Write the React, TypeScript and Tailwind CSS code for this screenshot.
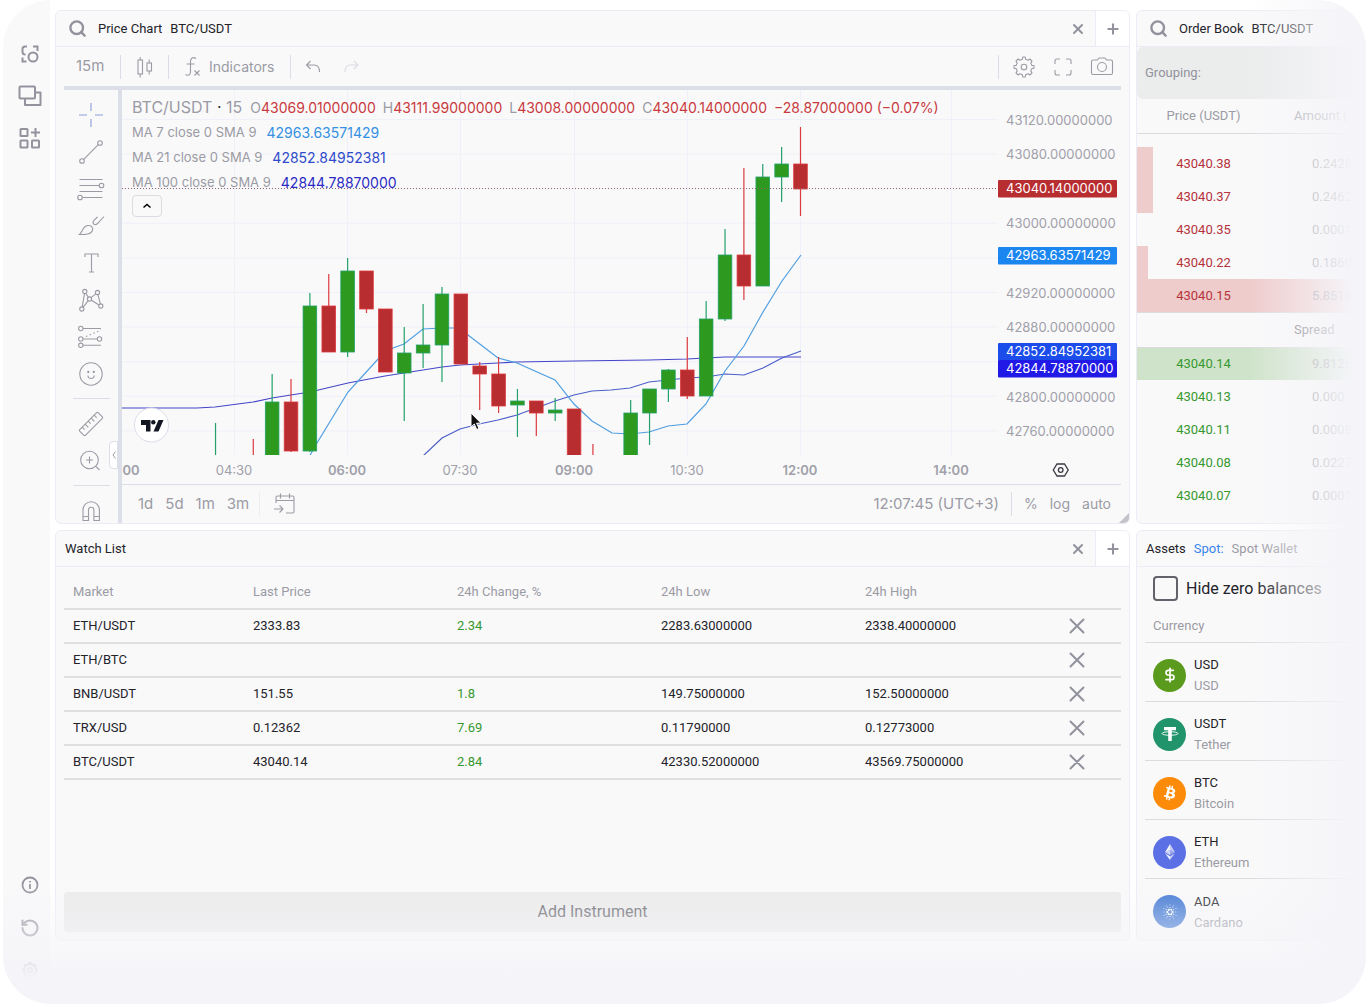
import React from "react";
import { DollarSign, Plus, RotateCcw, Search, X } from "lucide-react";
import { SiBitcoin, SiCardano } from "react-icons/si";

type Side = "up" | "down";

type Candle = {
  slot: number;
  high: number;
  top: number;
  bottom: number;
  low: number;
  side: Side;
};

// slot counts back from the latest candle, the rest are pane y values
const candles: Candle[] = [
  { slot: 0, high: 37, top: 74, bottom: 99, low: 126, side: "down" },
  { slot: 1, high: 57, top: 74, bottom: 87, low: 112, side: "up" },
  { slot: 2, high: 74, top: 87, bottom: 196, low: 196, side: "up" },
  { slot: 3, high: 78, top: 165, bottom: 196, low: 210, side: "down" },
  { slot: 4, high: 139, top: 165, bottom: 229, low: 231, side: "up" },
  { slot: 5, high: 211, top: 229, bottom: 306, low: 306, side: "up" },
  { slot: 6, high: 247, top: 280, bottom: 306, low: 309, side: "down" },
  { slot: 7, high: 279, top: 280, bottom: 299, low: 312, side: "up" },
  { slot: 8, high: 299, top: 299, bottom: 323, low: 355, side: "up" },
  { slot: 9, high: 310, top: 323, bottom: 370, low: 370, side: "up" },
  { slot: 11, high: 354, top: 370, bottom: 372, low: 372, side: "down" },
  { slot: 12, high: 319, top: 319, bottom: 370, low: 370, side: "down" },
  { slot: 13, high: 308, top: 320, bottom: 323, low: 331, side: "up" },
  { slot: 14, high: 311, top: 311, bottom: 323, low: 346, side: "down" },
  { slot: 15, high: 299, top: 311, bottom: 315, low: 347, side: "up" },
  { slot: 16, high: 267, top: 284, bottom: 316, low: 323, side: "down" },
  { slot: 17, high: 272, top: 276, bottom: 284, low: 320, side: "down" },
  { slot: 18, high: 204, top: 204, bottom: 274, low: 274, side: "down" },
  { slot: 19, high: 197, top: 204, bottom: 255, low: 292, side: "up" },
  { slot: 20, high: 214, top: 255, bottom: 263, low: 278, side: "up" },
  { slot: 21, high: 237, top: 263, bottom: 283, low: 331, side: "up" },
  { slot: 22, high: 219, top: 219, bottom: 282, low: 282, side: "down" },
  { slot: 23, high: 181, top: 181, bottom: 219, low: 223, side: "down" },
  { slot: 24, high: 168, top: 181, bottom: 262, low: 267, side: "up" },
  { slot: 25, high: 184, top: 216, bottom: 262, low: 262, side: "down" },
  { slot: 26, high: 203, top: 216, bottom: 361, low: 362, side: "up" },
  { slot: 27, high: 289, top: 312, bottom: 361, low: 362, side: "down" },
  { slot: 28, high: 284, top: 312, bottom: 370, low: 370, side: "up" },
  { slot: 29, high: 349, top: 370, bottom: 372, low: 372, side: "down" },
  { slot: 31, high: 333, top: 370, bottom: 372, low: 372, side: "up" },
];

const ma7 =
  "187,367 195,353 226,302 257,268 271,258 282,254 301,239 320,238 333,238 346,245 376,268 395,273 433,290 452,314 470,331 490,343 508,344 527,342 546,336 565,334 584,314 603,281 622,256 641,222 660,191 679,165";
const ma21 =
  "301,366 320,348 338,339 357,334 376,330 395,325 414,318 433,311 452,305 470,301 489,300 508,298 527,292 546,290 565,288 584,287 603,284 622,285 641,278 660,268 679,261";
const ma100 =
  "0,318 75,318 93,317 131,312 150,308 188,302 226,293 263,286 282,283 320,277 338,275 376,273 395,272 452,271 527,270 565,269 603,267 641,267 679,267";

const timeLabels = [
  { x: 9, text: "00", bold: true },
  { x: 112, text: "04:30", bold: false },
  { x: 225, text: "06:00", bold: true },
  { x: 338, text: "07:30", bold: false },
  { x: 452, text: "09:00", bold: true },
  { x: 565, text: "10:30", bold: false },
  { x: 678, text: "12:00", bold: true },
  { x: 829, text: "14:00", bold: true },
];

const priceLabels = [
  { y: 30, text: "43120.00000000" },
  { y: 64, text: "43080.00000000" },
  { y: 133, text: "43000.00000000" },
  { y: 203, text: "42920.00000000" },
  { y: 237, text: "42880.00000000" },
  { y: 307, text: "42800.00000000" },
  { y: 341, text: "42760.00000000" },
];

const priceTags = [
  { y: 98, text: "43040.14000000", color: "#b72d30" },
  { y: 165, text: "42963.63571429", color: "#1b86f0" },
  { y: 261, text: "42852.84952381", color: "#1c4cea" },
  { y: 278, text: "42844.78870000", color: "#2119e6" },
];

const markets = [
  { name: "ETH/USDT", last: "2333.83", change: "2.34", low: "2283.63000000", high: "2338.40000000" },
  { name: "ETH/BTC", last: "", change: "", low: "", high: "" },
  { name: "BNB/USDT", last: "151.55", change: "1.8", low: "149.75000000", high: "152.50000000" },
  { name: "TRX/USD", last: "0.12362", change: "7.69", low: "0.11790000", high: "0.12773000" },
  { name: "BTC/USDT", last: "43040.14", change: "2.84", low: "42330.52000000", high: "43569.75000000" },
];

const asks = [
  { price: "43040.38", amount: "0.2428", depth: 7 },
  { price: "43040.37", amount: "0.2462", depth: 7 },
  { price: "43040.35", amount: "0.0001", depth: 0 },
  { price: "43040.22", amount: "0.1860", depth: 5 },
  { price: "43040.15", amount: "5.8518", depth: 100 },
];

const bids = [
  { price: "43040.14", amount: "9.8126", depth: 100 },
  { price: "43040.13", amount: "0.000", depth: 0 },
  { price: "43040.11", amount: "0.0008", depth: 0 },
  { price: "43040.08", amount: "0.0227", depth: 0 },
  { price: "43040.07", amount: "0.0001", depth: 0 },
];

type IconProps = {
  children: React.ReactNode;
  className?: string;
};

const Icon = ({ children, className = "h-7 w-7" }: IconProps) => (
  <svg
    viewBox="0 0 28 28"
    fill="none"
    stroke="currentColor"
    strokeWidth="1.1"
    className={className}
    aria-hidden="true"
  >
    {children}
  </svg>
);

// eight rounded teeth around (14, 14)
const GEAR =
  "M12.4 6.2 12.8 4h2.4l.4 2.2 2.5 1 1.8-1.2 2.1 2.1-1.200 1.800 1 2.500 2.200.4v2.400l-2.200.4-1 2.500 1.200 1.800-2.100 2.100-1.800-1.200-2.500 1-.4 2.200h-2.400l-.4-2.200-2.500-1-1.800 1.200L6 19.900l1.200-1.800-1-2.500L4 15.200v-2.400l2.200-.4 1-2.500L6 8.100 8.100 6l1.800 1.200z";

const drawingTools = [
  {
    label: "Cross",
    active: true,
    icon: <path d="M14 2v8M14 18v8M2 14h8M18 14h8" />,
  },
  {
    label: "Trend line",
    icon: (
      <>
        <circle cx="5" cy="23" r="2.3" />
        <circle cx="23" cy="5" r="2.3" />
        <path d="M6.7 21.3 21.3 6.7" />
      </>
    ),
  },
  {
    label: "Fib retracement",
    icon: (
      <>
        <path d="M2.5 4.500h23M2.500 10.500h19.500M2.500 16.500h23M5.500 22.500h20" />
        <circle cx="24.5" cy="10.5" r="2.3" />
        <circle cx="3" cy="22.5" r="2.3" />
      </>
    ),
  },
  {
    label: "Brush",
    icon: (
      <>
        <path d="M2.5 22.5C6 19.500 5.500 14.500 10.500 13.500c3.500-.5 6 2 5 5-1.500 4-7 4-13 4z" />
        <path d="M27 4.500 20.500 11.500c-2.500 2.500-5.500.5-4-2.500C17.500 7.500 19 6.500 20.500 5" />
      </>
    ),
  },
  {
    label: "Text",
    icon: <path d="M8 8V5h13v3M14.5 5v18M12 23h5" />,
  },
  {
    label: "Patterns",
    icon: (
      <>
        <circle cx="7.8" cy="5.5" r="2.1" />
        <circle cx="20.5" cy="6.5" r="2.1" />
        <circle cx="4.8" cy="23" r="2.1" />
        <circle cx="23.8" cy="20" r="2.1" />
        <circle cx="12.5" cy="13" r="2.1" />
        <path d="M7.5 7.6 5.2 20.9M8.8 7.4l2.6 3.9M14 11.6l4.9-3.7M20.9 8.600l2.500 9.300M14.400 14.200l7.600 4.800M11.200 14.700l-5.100 6.700" />
      </>
    ),
  },
  {
    label: "Prediction",
    icon: (
      <>
        <circle cx="3.8" cy="5.5" r="2.2" />
        <circle cx="3.8" cy="16" r="2.2" />
        <circle cx="22.5" cy="16" r="2.2" />
        <circle cx="3.8" cy="22.3" r="2.2" />
        <path d="M6 5.500h18M6 16h14.300M6 22.300h18" />
        <path d="M9 13.500 24 7" strokeDasharray="1.5 2.5" />
      </>
    ),
  },
  {
    label: "Emoji",
    icon: (
      <>
        <circle cx="14" cy="14" r="11.2" />
        <path d="M10.800 15.500c.5 4 6 4 6.500 0" />
        <circle cx="11.3" cy="12" r=".6" fill="currentColor" />
        <circle cx="16.8" cy="12" r=".6" fill="currentColor" />
      </>
    ),
  },
];

const lowerTools = [
  {
    label: "Measure",
    icon: (
      <g transform="rotate(-45 14 14)">
        <rect x="1" y="10" width="26" height="8" rx="1" />
        <path d="M5.500 10v3.500M9.700 10v4.500M14 10v3.500M18.300 10v4.500M22.500 10v3.500" />
      </g>
    ),
  },
  {
    label: "Zoom in",
    icon: (
      <>
        <circle cx="12.5" cy="13" r="8.8" />
        <path d="M18.800 19.300 22.500 23M12.500 9.500v7M9 13h7" />
      </>
    ),
  },
];

type PanelHeaderProps = {
  children: React.ReactNode;
  closable?: boolean;
};

const PanelHeader = ({ children, closable }: PanelHeaderProps) => (
  <header className="flex h-9 shrink-0 items-stretch border-b border-[#ececf6]">
    <div className="flex flex-1 items-center gap-2 px-[9px] text-[13px] text-[#232329]">
      {children}
    </div>
    {closable ? (
      <>
        <button type="button" aria-label="Close" className="px-[9px] text-[#92929d]">
          <X className="h-4 w-4" strokeWidth={3} />
        </button>
        <button
          type="button"
          aria-label="Add tab"
          className="flex w-[34px] items-center justify-center border-l border-[#ececf6] bg-white text-[#92929d]"
        >
          <Plus className="h-4 w-4" strokeWidth={3} />
        </button>
      </>
    ) : null}
  </header>
);

const SearchIcon = () => (
  <Search className="ml-[3px] mr-[3px] h-[19px] w-[19px] text-[#92929d]" strokeWidth={3} />
);

const Rail = () => (
  <nav className="flex w-[47px] shrink-0 flex-col items-center bg-[#f9f9fa] pt-10 pb-5 pl-1.5 text-[#93939e]">
    <div className="flex flex-col gap-3.5">
      <button type="button" aria-label="Focus">
        <Icon>
          <g strokeWidth="2">
            <path d="M11 6.500H9A2.500 2.500 0 0 0 6.500 9v3c0 1.500 1 2.500 3 2.500M17 6.500h4.500V11M6.500 17.500v4h4" />
            <circle cx="17" cy="17" r="4.500" />
          </g>
        </Icon>
      </button>
      <button type="button" aria-label="Windows">
        <Icon>
          <g strokeWidth="2">
            <rect x="3.500" y="4.500" width="15.500" height="12" rx="1" />
            <path d="M19 10.500h5.500v12.500H9v-6.500" strokeLinejoin="round" />
          </g>
        </Icon>
      </button>
      <button type="button" aria-label="Widgets">
        <Icon>
          <g strokeWidth="2">
            <rect x="4.500" y="5" width="7" height="7" rx=".5" />
            <rect x="4.500" y="16.500" width="7" height="7" rx=".5" />
            <rect x="16" y="16.500" width="7" height="7" rx=".5" />
            <path d="M19.500 4v9M15 8.500h9" />
          </g>
        </Icon>
      </button>
    </div>
    <div className="mt-auto flex flex-col gap-3.5">
      <button type="button" aria-label="Info">
        <Icon>
          <g strokeWidth="1.800">
            <circle cx="14" cy="13" r="7.500" />
            <path d="M14 12v5M14 9v1.500" />
          </g>
        </Icon>
      </button>
      <button type="button" aria-label="Reset" className="flex h-7 items-center justify-center">
        <RotateCcw className="h-5 w-5" strokeWidth={2.5} />
      </button>
      <button type="button" aria-label="Settings" className="flex h-7 items-center justify-center">
        <Icon className="h-5 w-5">
          <g strokeWidth="2.500">
            <path d={GEAR} strokeLinejoin="round" />
            <circle cx="14" cy="14" r="3" />
          </g>
        </Icon>
      </button>
    </div>
  </nav>
);

const Divider = () => <span className="h-6 w-px bg-[#dcdde6]" />;

const ChartToolbar = () => (
  <div className="mx-2 flex h-[39px] items-center text-[#9b9ba4]">
    <button type="button" className="w-14 pl-3 text-left text-[15px]">
      15m
    </button>
    <Divider />
    <button type="button" aria-label="Candles" className="flex w-[47px] justify-center">
      <Icon>
        <rect x="7" y="7" width="4.500" height="14" />
        <rect x="16" y="10" width="4.500" height="8" />
        <path d="M9.200 4v3M9.200 21v3.500M18.200 6.500V10M18.200 18v3.500" />
      </Icon>
    </button>
    <Divider />
    <button type="button" className="flex w-[121px] items-center gap-0.5 pl-2.5 text-sm">
      <Icon>
        <path d="M17 5.500c-3-2-5.500-.5-5.500 3V19c0 3-2.500 4-5 2.500M7.500 11h8" />
        <path d="M15.500 17.500l5 5M20.500 17.500l-5 5" />
      </Icon>
      Indicators
    </button>
    <Divider />
    <button type="button" aria-label="Undo" className="ml-2">
      <Icon>
        <path d="M11.500 8 7.500 12l4 4M7.500 12h7.500c4 0 5.500 2.500 5.500 7" />
      </Icon>
    </button>
    <button type="button" aria-label="Redo" className="ml-2.5 text-[#dcdce2]">
      <Icon>
        <path d="M17 8l4 4-4 4M21 12h-7.500C9.500 12 8 14.500 8 19" />
      </Icon>
    </button>
    <div className="ml-auto flex items-center gap-[11px] pr-[5px]">
      <Divider />
      <button type="button" aria-label="Chart settings">
        <Icon>
          <path d={GEAR} strokeLinejoin="round" />
          <circle cx="14" cy="14" r="2.800" />
        </Icon>
      </button>
      <button type="button" aria-label="Fullscreen">
        <Icon>
          <path d="M11 6H8a2 2 0 0 0-2 2v3M17 6h3a2 2 0 0 1 2 2v3M11 22H8a2 2 0 0 1-2-2v-3M17 22h3a2 2 0 0 0 2-2v-3" />
        </Icon>
      </button>
      <button type="button" aria-label="Snapshot">
        <Icon>
          <path d="M5 7h4.500l1.500-2h6l1.500 2H23a1.500 1.500 0 0 1 1.500 1.500v11.500A1.500 1.500 0 0 1 23 21.500H5A1.500 1.500 0 0 1 3.500 20V8.500A1.500 1.500 0 0 1 5 7z" />
          <circle cx="14" cy="14" r="4.500" />
        </Icon>
      </button>
    </div>
  </div>
);

const DrawingBar = () => (
  <div className="relative w-[58px] shrink-0 border-r-4 border-[#dcdee8] pt-1.5 text-[#9b9ba4]">
    <div className="flex flex-col items-center overflow-hidden">
      {drawingTools.map((tool) => (
        <button
          key={tool.label}
          type="button"
          aria-label={tool.label}
          className={
            tool.active
              ? "flex h-[37px] items-center text-[#8a9fd6]"
              : "flex h-[37px] items-center"
          }
        >
          <Icon>{tool.icon}</Icon>
        </button>
      ))}
      <span className="my-1.5 h-px w-[37px] bg-[#dcdde6]" />
      {lowerTools.map((tool) => (
        <button
          key={tool.label}
          type="button"
          aria-label={tool.label}
          className="flex h-[37px] items-center"
        >
          <Icon>{tool.icon}</Icon>
        </button>
      ))}
      <span className="my-1.5 h-px w-[37px] bg-[#dcdde6]" />
      <button type="button" aria-label="Magnet" className="-mb-2 flex h-[37px] items-center">
        <Icon>
          <path d="M6 23.500V13a8.200 8.200 0 0 1 16.400 0v10.500h-5.500V13a2.700 2.700 0 0 0-5.400 0v10.500zM6 19.500h5.500M16.900 19.500h5.500" />
        </Icon>
      </button>
    </div>
    <button
      type="button"
      aria-label="Collapse toolbar"
      className="absolute top-[351px] right-0 flex h-7 w-[9px] items-center justify-center rounded-l border border-[#dcdee8] bg-white"
    >
      <svg viewBox="0 0 4 8" className="h-2 w-1" fill="none" stroke="currentColor" aria-hidden="true">
        <path d="M3.500.5 1 4l2.500 3.500" />
      </svg>
    </button>
  </div>
);

const CandleShape = ({ candle }: { candle: Candle }) => {
  const x = 678.5 - candle.slot * 18.87;
  const up = candle.side === "up";
  return (
    <g stroke={up ? "#23a06b" : "#dc3a3e"}>
      <path d={`M${x} ${candle.high}V${candle.low}`} strokeWidth="1.2" />
      <rect
        x={x - 6.8}
        y={candle.top}
        width="13.6"
        height={candle.bottom - candle.top}
        fill={up ? "#2e991f" : "#b82e30"}
        strokeWidth="0.8"
      />
    </g>
  );
};

const PriceChart = () => (
  <svg viewBox="0 0 999 394" className="block h-auto w-full" role="img" aria-label="BTC/USDT candles">
    <defs>
      <clipPath id="pane">
        <rect width="876" height="365" />
      </clipPath>
    </defs>
    <g clipPath="url(#pane)">
      <g stroke="#f0f0f8">
        {Array.from({ length: 10 }, (_, i) => (
          <path key={i} d={`M0 ${29.5 + i * 34.6}H876`} />
        ))}
        {timeLabels.slice(1).map((label) => (
          <path key={label.x} d={`M${label.x + 0.5} 0V365`} />
        ))}
      </g>
      <g fill="none" strokeWidth="1.2">
        <polyline points={ma100} stroke="#4545c9" />
        <polyline points={ma21} stroke="#4a5fc8" />
        <polyline points={ma7} stroke="#4f9ee0" />
      </g>
      {candles.map((candle) => (
        <CandleShape key={candle.slot} candle={candle} />
      ))}
      <path d="M0 98.500H876" stroke="#8a6a6a" strokeDasharray="1 2" />
    </g>
    <circle cx="29.500" cy="335" r="17" fill="#fff" stroke="#dcdee8" />
    <path d="M19 330h9.500v11.500h-4.500V335H19zM36.500 330h5l-5 11.500h-5z" fill="#131722" />
    <circle cx="31.300" cy="332.300" r="2.200" fill="#131722" />
    <path
      d="M349 323v14l3.300-3 2.400 5.500 2.300-1-2.400-5.300h4.400z"
      fill="#111"
      stroke="#fff"
      strokeWidth="1"
    />
    <g className="font-['Inter',sans-serif] text-[13px]" fill="#a0a0a9">
      {timeLabels.map((label) => (
        <text
          key={label.x}
          x={label.x}
          y="385"
          textAnchor="middle"
          fontWeight={label.bold ? 600 : 400}
        >
          {label.text}
        </text>
      ))}
      {priceLabels.map((label) => (
        <text key={label.y} x="884" y={label.y + 5}>
          {label.text}
        </text>
      ))}
      {priceTags.map((tag) => (
        <g key={tag.text}>
          <rect x="876" y={tag.y - 8} width="119" height="17.500" rx="1" fill={tag.color} />
          <text x="884" y={tag.y + 5} fill="#fff">
            {tag.text}
          </text>
        </g>
      ))}
    </g>
    <g fill="none" stroke="#3a3a42" strokeWidth="1.300">
      <path d="M935 374h7.500l3.700 6-3.700 6H935l-3.700-6z" />
      <circle cx="938.700" cy="380" r="2.300" />
    </g>
  </svg>
);

const ohlc = [
  { label: "O", value: "43069.01000000" },
  { label: "H", value: "43111.99000000" },
  { label: "L", value: "43008.00000000" },
  { label: "C", value: "43040.14000000" },
];

const averages = [
  { name: "MA 7 close 0 SMA 9", value: "42963.63571429", color: "text-[#3590e2]" },
  { name: "MA 21 close 0 SMA 9", value: "42852.84952381", color: "text-[#2f4bcb]" },
  { name: "MA 100 close 0 SMA 9", value: "42844.78870000", color: "text-[#2b2bc4]" },
];

const ChartLegend = () => (
  <div className="absolute top-1 left-2.5 text-[#9b9ba4]">
    <div className="flex h-[26px] items-baseline gap-[7px] text-sm leading-[26px] whitespace-nowrap">
      <span className="pr-px text-base leading-[26px]">
        BTC/USDT <span className="text-[#333]">·</span> 15
      </span>
      {ohlc.map((item) => (
        <span key={item.label}>
          {item.label}
          <span className="text-[#c93a3e]">{item.value}</span>
        </span>
      ))}
      <span className="text-[#c93a3e]">−28.87000000 (−0.07%)</span>
    </div>
    {averages.map((row) => (
      <div key={row.name} className="flex h-[25px] items-center gap-2.5 text-[13px]">
        <span>{row.name}</span>
        <span className={`text-sm ${row.color}`}>{row.value}</span>
      </div>
    ))}
    <button
      type="button"
      aria-label="Hide indicators"
      className="flex h-[22px] w-[30px] items-center justify-center rounded-sm border border-[#dcdce2] bg-[#f9f9fa] text-black"
    >
      <svg viewBox="0 0 10 6" className="h-1.5 w-2.5" fill="none" stroke="currentColor" strokeWidth="1.500" aria-hidden="true">
        <path d="M1.500 4.500 5 1.500l3.500 3" />
      </svg>
    </button>
  </div>
);

const ChartPanel = () => (
  <section className="relative overflow-hidden rounded-md border border-[#ececf6] bg-[#f9f9fa]">
    <PanelHeader closable>
      <SearchIcon />
      <h2>Price Chart</h2>
      <span>BTC/USDT</span>
    </PanelHeader>
    <div className="font-['Inter',sans-serif]">
      <ChartToolbar />
      <div className="mx-2 flex border-t-4 border-[#dcdee8]">
        <DrawingBar />
        <div className="min-w-0 flex-1">
          <div className="relative">
            <PriceChart />
            <ChartLegend />
          </div>
          <div className="flex h-[39px] items-center border-t border-[#dcdde6] text-[15px] text-[#9b9ba4]">
            <div className="flex gap-3 pl-4">
              <button type="button">1d</button>
              <button type="button">5d</button>
              <button type="button">1m</button>
              <button type="button">3m</button>
            </div>
            <span className="mx-2.5 h-6 w-px bg-[#ececf2]" />
            <button type="button" aria-label="Go to date">
              <Icon>
                <path d="M6 13V7.500A1.500 1.500 0 0 1 7.500 6h15A1.500 1.500 0 0 1 24 7.500v14a1.500 1.500 0 0 1-1.500 1.500H16M6 10.500h18M10.500 3.500v5M19.500 3.500v5M4 19h9M9.500 15.500 13 19l-3.500 3.500" />
              </Icon>
            </button>
            <div className="ml-auto flex items-center gap-3 pr-2.5 text-sm">
              <span className="text-[15px]">12:07:45 (UTC+3)</span>
              <Divider />
              <button type="button">%</button>
              <button type="button">log</button>
              <button type="button">auto</button>
            </div>
          </div>
        </div>
      </div>
    </div>
    <svg viewBox="0 0 10 10" className="absolute right-0 bottom-0 h-2.5 w-2.5" aria-hidden="true">
      <path d="M10 0v10H0z" fill="#c3c3ca" />
    </svg>
  </section>
);

type BookRowProps = {
  row: { price: string; amount: string; depth: number };
  side: Side;
};

const BookRow = ({ row, side }: BookRowProps) => (
  <tr className="h-[33px]">
    <td
      className={
        side === "up" ? "text-center text-[#36982f]" : "text-center text-[#b5333a]"
      }
    >
      {row.price}
    </td>
    <td className="relative pl-[42px] text-[#8f8f98]">
      {row.amount}
      {/* depth bar spans both columns */}
      <span className="absolute inset-y-0 right-0 -left-[133px] -z-10">
        <span
          className={side === "up" ? "block h-full bg-[#cfe3ca]" : "block h-full bg-[#efcccc]"}
          style={{ width: `${row.depth}%` }}
        />
      </span>
    </td>
  </tr>
);

const OrderBook = () => (
  <section className="overflow-hidden rounded-md border border-[#ececf6] bg-[#f9f9fa]">
    <PanelHeader>
      <SearchIcon />
      <h2>Order Book</h2>
      <span>BTC/USDT</span>
    </PanelHeader>
    <div className="flex h-[52px] items-center rounded-md bg-[#ebecec] px-2 text-[13px] text-[#92929d]">
      Grouping:
    </div>
    <table className="relative isolate w-full table-fixed text-[13px]">
      <thead>
        <tr className="h-[34px] border-b border-[#dcdce0] text-[#9b9ba4]">
          <th className="w-[133px] text-center font-normal">Price (USDT)</th>
          <th className="pl-6 text-left font-normal whitespace-nowrap">Amount (</th>
        </tr>
      </thead>
      <tbody>
        <tr className="h-3.5">
          <td colSpan={2} />
        </tr>
        {asks.map((row) => (
          <BookRow key={row.price} row={row} side="down" />
        ))}
        <tr className="h-[35px] border-y border-[#dcdce0]">
          <td />
          <td className="pl-6 text-[#77777f]">Spread</td>
        </tr>
        {bids.map((row) => (
          <BookRow key={row.price} row={row} side="up" />
        ))}
      </tbody>
    </table>
  </section>
);

const WatchList = () => (
  <section className="flex flex-col overflow-hidden rounded-md border border-[#ececf6] bg-[#f9f9fa]">
    <PanelHeader closable>
      <h2>Watch List</h2>
    </PanelHeader>
    <div className="flex flex-1 flex-col p-2">
      <table className="w-full table-fixed text-left text-[13px] text-[#232329]">
        <thead>
          <tr className="h-[34px] border-b-2 border-[#e0e0e2] text-[#9b9ba4]">
            <th className="w-[180px] pl-[9px] font-normal">Market</th>
            <th className="w-[204px] pl-[9px] font-normal">Last Price</th>
            <th className="w-[204px] pl-[9px] font-normal">24h Change, %</th>
            <th className="w-[204px] pl-[9px] font-normal">24h Low</th>
            <th className="pl-[9px] font-normal">24h High</th>
            <th className="w-[88px]" />
          </tr>
        </thead>
        <tbody>
          {markets.map((market) => (
            <tr key={market.name} className="h-[34px] border-b-2 border-[#e0e0e2]">
              <td className="pl-[9px]">{market.name}</td>
              <td className="pl-[9px]">{market.last}</td>
              <td className="pl-[9px] text-[#36982f]">{market.change}</td>
              <td className="pl-[9px]">{market.low}</td>
              <td className="pl-[9px]">{market.high}</td>
              <td>
                <button
                  type="button"
                  aria-label={`Remove ${market.name}`}
                  className="mx-auto block text-[#92929d]"
                >
                  <svg viewBox="0 0 16 16" className="h-4 w-4" stroke="currentColor" strokeWidth="2" aria-hidden="true">
                    <path d="M1.500 1.500l13 13M14.500 1.500l-13 13" strokeLinecap="round" />
                  </svg>
                </button>
              </td>
            </tr>
          ))}
        </tbody>
      </table>
      <button type="button" className="mt-auto h-10 rounded bg-[#ebebeb] text-base text-[#66666d]">
        Add Instrument
      </button>
    </div>
  </section>
);

const assets = [
  {
    code: "USD",
    name: "USD",
    color: "bg-[#5a9a1c]",
    logo: <DollarSign className="h-4 w-4" strokeWidth={2.5} />,
  },
  {
    code: "USDT",
    name: "Tether",
    color: "bg-[#22946c]",
    logo: (
      <svg viewBox="0 0 18 18" className="h-[18px] w-[18px]" aria-hidden="true">
        <path d="M3 2h12v3.300h-4.200V16H7.200V5.300H3z" fill="#fff" />
        <ellipse cx="9" cy="8.500" rx="8" ry="1.800" fill="none" stroke="#fff" strokeWidth=".9" />
      </svg>
    ),
  },
  {
    code: "BTC",
    name: "Bitcoin",
    color: "bg-[#fd8b0a]",
    logo: (
      <span className="grid place-items-center">
        <span className="col-start-1 row-start-1 h-5 w-5 rounded-full bg-white" />
        <SiBitcoin className="col-start-1 row-start-1 h-6 w-6 text-[#fd8b0a]" />
      </span>
    ),
  },
  {
    code: "ETH",
    name: "Ethereum",
    color: "bg-[#5a70e4]",
    logo: (
      <svg viewBox="0 0 10 16" className="h-4 w-2.5" fill="#fff" aria-hidden="true">
        <path d="M5 0 0 8.200 5 6z" opacity=".9" />
        <path d="M5 0v6l5 2.200z" opacity=".65" />
        <path d="M0 8.200 5 11V6z" opacity=".7" />
        <path d="M10 8.200 5 11V6z" opacity=".4" />
        <path d="M0 9.300 5 16v-3.800z" opacity=".9" />
        <path d="M10 9.300 5 16v-3.800z" opacity=".65" />
      </svg>
    ),
  },
  {
    code: "ADA",
    name: "Cardano",
    color: "bg-[#3f77d3]",
    logo: <SiCardano className="h-4 w-4" />,
  },
];

const Assets = () => (
  <section className="overflow-hidden rounded-md border border-[#ececf6] bg-[#f9f9fa]">
    <PanelHeader>
      <h2>Assets</h2>
      <span className="text-[#3a86ea]">Spot:</span>
      <span className="text-[#9b9ba4]">Spot Wallet</span>
    </PanelHeader>
    <div className="pt-[9px] pl-2">
      <label className="flex items-center gap-2 pl-2 text-base text-[#232329]">
        <input
          type="checkbox"
          className="h-[25px] w-[25px] appearance-none rounded border-2 border-[#62626a]"
        />
        Hide zero balances
      </label>
      <p className="flex h-[42px] items-center border-b border-[#dcdce0] pt-2 pl-2 text-[13px] text-[#9b9ba4]">
        Currency
      </p>
      <ul className="divide-y divide-[#dcdce0] text-[13px]">
        {assets.map((asset) => (
          <li key={asset.code} className="flex h-[59px] items-center gap-2 pt-1.5 pl-2">
            <span
              className={`flex h-[33px] w-[33px] items-center justify-center rounded-full text-white ${asset.color}`}
            >
              {asset.logo}
            </span>
            <span className="leading-[21px]">
              <span className="block text-[#232329]">{asset.code}</span>
              <span className="block text-[#9b9ba4]">{asset.name}</span>
            </span>
          </li>
        ))}
      </ul>
    </div>
  </section>
);

export default function App() {
  return (
    <div className="flex min-h-screen bg-white pl-[3px] font-['Roboto',sans-serif]">
      <div className="relative flex min-w-0 flex-1 gap-[5px] overflow-hidden rounded-[48px] bg-white">
        <Rail />
        <main className="grid min-w-0 flex-1 grid-cols-[minmax(0,1fr)_230px] grid-rows-[auto_1fr] gap-1.5 pt-2.5 pb-[63px]">
          <ChartPanel />
          <OrderBook />
          <WatchList />
          <Assets />
        </main>
        <div className="pointer-events-none absolute inset-y-0 right-0 w-[116px] bg-linear-to-r from-[#f5f5f9]/0 to-[#f5f5f9] to-90%" />
        <div className="pointer-events-none absolute inset-x-0 bottom-0 h-[124px] bg-linear-to-b from-[#f5f5f9]/0 to-[#f5f5f9] to-80%" />
      </div>
    </div>
  );
}
